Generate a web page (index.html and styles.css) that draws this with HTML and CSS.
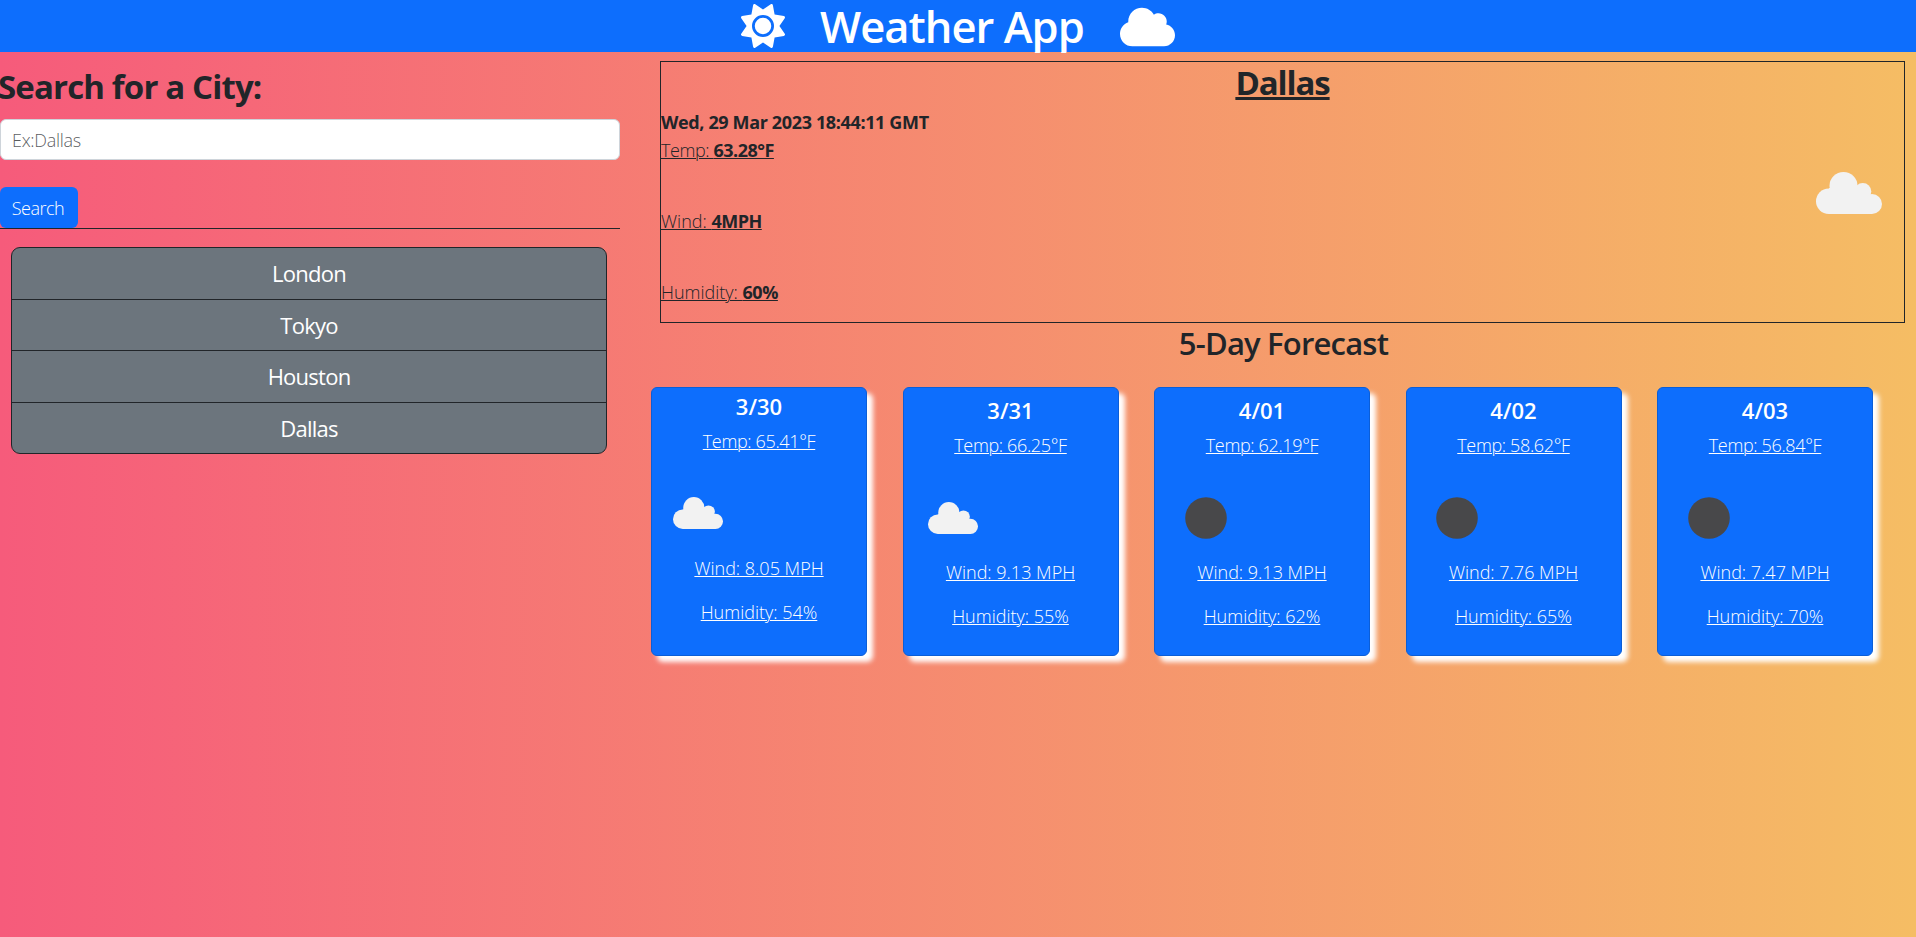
FILE: index.html
```html
<!DOCTYPE html>
<html lang="en">
<head>
<meta charset="utf-8">
<title>Weather App</title>
<link rel="stylesheet" href="styles.css">
</head>
<body>
<svg class="defs" aria-hidden="true">
  <symbol id="cloudy" viewBox="0 0 66 42">
    <circle cx="12.8" cy="29.2" r="12.8"/>
    <circle cx="27.5" cy="14" r="14"/>
    <circle cx="46.8" cy="19.5" r="8.5"/>
    <circle cx="56" cy="32" r="10"/>
    <path d="M13 16h34l9 8v18H13z"/>
  </symbol>
  <symbol id="night" viewBox="0 0 42 42"><circle cx="21" cy="21" r="20.8"/></symbol>
</svg>
<header class="header">
  <svg class="sun" viewBox="0 0 512 512"><path d="M361.5 1.2c5 2.1 8.6 6.6 9.6 11.9L391 121l107.9 19.8c5.3 1 9.8 4.6 11.9 9.6s1.5 10.7-1.6 15.2L446.9 256l62.3 90.3c3.1 4.5 3.7 10.2 1.6 15.2s-6.6 8.6-11.9 9.6L391 391 371.1 498.9c-1 5.3-4.6 9.8-9.6 11.9s-10.7 1.5-15.2-1.6L256 446.9l-90.3 62.3c-4.5 3.1-10.2 3.7-15.2 1.6s-8.6-6.6-9.6-11.9L121 391 13.1 371.1c-5.3-1-9.8-4.6-11.9-9.6s-1.5-10.7 1.6-15.2L65.1 256 2.8 165.7c-3.1-4.5-3.7-10.2-1.6-15.2s6.6-8.6 11.9-9.6L121 121 140.9 13.1c1-5.3 4.6-9.8 9.6-11.9s10.7-1.5 15.2 1.6L256 65.1 346.3 2.8c4.5-3.1 10.2-3.7 15.2-1.6zM160 256a96 96 0 1 1 192 0 96 96 0 1 1 -192 0zm224 0a128 128 0 1 0 -256 0 128 128 0 1 0 256 0z"/></svg>
  <h1 class="title">Weather App</h1>
  <svg class="cloud" viewBox="0 0 640 512"><path d="M0 336c0 79.5 64.5 144 144 144H512c70.7 0 128-57.3 128-128c0-61.9-44-113.6-102.4-125.4c4.1-10.7 6.4-22.4 6.4-34.6c0-53-43-96-96-96c-19.7 0-38.1 6-53.3 16.2C367 64.2 315.3 32 256 32C167.6 32 96 103.6 96 192c0 2.7 .1 5.4 .2 8.1C40.2 219.8 0 273.2 0 336z"/></svg>
</header>
<main class="main">
  <aside class="sidebar">
    <h2 class="search-title">Search for a City:</h2>
    <input class="search-input" type="text" placeholder="Ex:Dallas">
    <div class="search-row"><button class="search-button">Search</button></div>
    <ul class="cities">
      <li class="city">London</li>
      <li class="city">Tokyo</li>
      <li class="city">Houston</li>
      <li class="city">Dallas</li>
    </ul>
  </aside>
  <section class="content">
    <article class="current">
      <h2 class="current-city">Dallas</h2>
      <div class="current-body">
        <div class="readings">
          <p class="date">Wed, 29 Mar 2023 18:44:11 GMT</p>
          <p class="reading tight">Temp: <b>63.28°F</b></p>
          <p class="reading">Wind: <b>4MPH</b></p>
          <p class="reading">Humidity: <b>60%</b></p>
        </div>
        <svg class="current-icon"><use href="#cloudy"/></svg>
      </div>
    </article>
    <h2 class="forecast-title">5-Day Forecast</h2>
    <div class="forecast">
      <div class="card first">
        <h3 class="day">3/30</h3>
        <p class="stat temp">Temp: 65.41°F</p>
        <div class="icon-box"><svg class="icon-cloud"><use href="#cloudy"/></svg></div>
        <p class="stat wind">Wind: 8.05 MPH</p>
        <p class="stat humidity">Humidity: 54%</p>
      </div>
      <div class="card">
        <h3 class="day">3/31</h3>
        <p class="stat temp">Temp: 66.25°F</p>
        <div class="icon-box"><svg class="icon-cloud"><use href="#cloudy"/></svg></div>
        <p class="stat wind">Wind: 9.13 MPH</p>
        <p class="stat humidity">Humidity: 55%</p>
      </div>
      <div class="card">
        <h3 class="day">4/01</h3>
        <p class="stat temp">Temp: 62.19°F</p>
        <div class="icon-box"><svg class="icon-night"><use href="#night"/></svg></div>
        <p class="stat wind">Wind: 9.13 MPH</p>
        <p class="stat humidity">Humidity: 62%</p>
      </div>
      <div class="card">
        <h3 class="day">4/02</h3>
        <p class="stat temp">Temp: 58.62°F</p>
        <div class="icon-box"><svg class="icon-night"><use href="#night"/></svg></div>
        <p class="stat wind">Wind: 7.76 MPH</p>
        <p class="stat humidity">Humidity: 65%</p>
      </div>
      <div class="card">
        <h3 class="day">4/03</h3>
        <p class="stat temp">Temp: 56.84°F</p>
        <div class="icon-box"><svg class="icon-night"><use href="#night"/></svg></div>
        <p class="stat wind">Wind: 7.47 MPH</p>
        <p class="stat humidity">Humidity: 70%</p>
      </div>
    </div>
  </section>
</main>
</body>
</html>
```
FILE: styles.css
```css
* { box-sizing: border-box; margin: 0; padding: 0; }

body {
  height: 937px;
  overflow: hidden;
  font: 300 18px/27px "Open Sans", "Noto Sans", sans-serif;
  color: #212529;
  background: linear-gradient(90deg, #f65b7b, #f5bd64);
}

.defs { display: none; }

.header {
  display: flex;
  justify-content: center;
  align-items: center;
  height: 52px;
  background: #0d6efd;
  color: #fff;
  fill: #fff;
}
.sun { width: 44px; height: 44px; margin-right: 35px; }
.title { width: 265px; font-size: 43.5px; font-weight: 600; line-height: 52px; padding-top: 2px; letter-spacing: -0.95px; white-space: nowrap; }
.cloud { width: 55px; height: 44px; margin: 1px 0 0 35px; }

.main { display: flex; }

.sidebar { width: 620px; padding-top: 15px; }
.search-title { margin-left: -2px; font-size: 33px; font-weight: 700; line-height: 40px; letter-spacing: -0.85px; white-space: nowrap; }
.search-input {
  display: block;
  width: 100%;
  height: 41px;
  margin-top: 12px;
  padding: 6px 11px;
  border: 1px solid #ced4da;
  border-radius: 6px;
  background: #fff;
  font: inherit;
  letter-spacing: -0.3px;
}
.search-input::placeholder { color: #212529bf; }
.search-row { display: flex; margin-top: 27px; border-bottom: 1px solid #212529; }
.search-button {
  width: 78px;
  height: 41px;
  padding: 1px 2px 0 0;
  border: 0;
  border-radius: 6px;
  background: #0d6efd;
  color: #fff;
  font: inherit;
  letter-spacing: -0.5px;
}
.cities {
  display: flex;
  flex-direction: column;
  width: 596px;
  height: 207px;
  margin: 18px 0 0 11px;
  border: 1px solid #212529;
  border-radius: 9px;
  background: #6c757d;
  color: #fff;
  font-size: 22px;
  font-weight: 400;
  letter-spacing: -0.75px;
  list-style: none;
  text-align: center;
}
.city { display: flex; flex: 1; align-items: center; justify-content: center; padding-top: 1px; }
.city + .city { border-top: 1px solid #212529; }

.content { width: 1254px; margin-left: 31px; }
.current { width: 1245px; height: 262px; margin: 9px 0 0 9px; padding-top: 1px; border: 1px solid #212529; }
.current-city {
  font-size: 33px;
  font-weight: 700;
  line-height: 40px;
  letter-spacing: -1.1px;
  text-align: center;
  text-decoration: underline 3px;
  text-underline-offset: 2px;
}
.current-body { display: flex; justify-content: space-between; }
.readings { padding-top: 6px; }
.date { margin-bottom: 1px; font-weight: 700; letter-spacing: -0.36px; }
.reading { margin-bottom: 44px; text-decoration: underline 1px; text-underline-offset: 1px; }
.reading b { font-weight: 700; letter-spacing: -0.5px; }
.tight { letter-spacing: -0.4px; }
.current-icon { width: 66px; height: 42px; margin: 69px 22px 0 0; fill: #f2f2f2; }

.forecast-title { margin-left: 11px; padding-top: 1px; font-size: 31px; font-weight: 600; line-height: 38px; letter-spacing: -0.8px; text-align: center; }
.forecast { display: flex; gap: 35.5px; margin-top: 25px; }
.card {
  width: 216px;
  height: 269px;
  padding-top: 9px;
  border: 1px solid #0b5ed7;
  border-radius: 6px;
  background: #0d6efd;
  box-shadow: 6px 6px 5px #fff;
  color: #fff;
  text-align: center;
}
.first { padding-top: 5px; }
.day { font-size: 22px; font-weight: 600; line-height: 27px; margin-bottom: 8px; }
.stat { text-decoration: underline 1px; text-underline-offset: 1px; white-space: nowrap; }
.temp { letter-spacing: -0.35px; }
.icon-box { display: flex; height: 100px; }
.icon-cloud { width: 50px; height: 32px; margin: 43px 0 0 24px; fill: #f2f2f2; }
.first .icon-cloud { margin: 42px 0 0 21px; }
.icon-night { width: 42px; height: 42px; margin: 38px 0 0 29.5px; fill: #48484a; }
.humidity { margin-top: 17px; }
```
